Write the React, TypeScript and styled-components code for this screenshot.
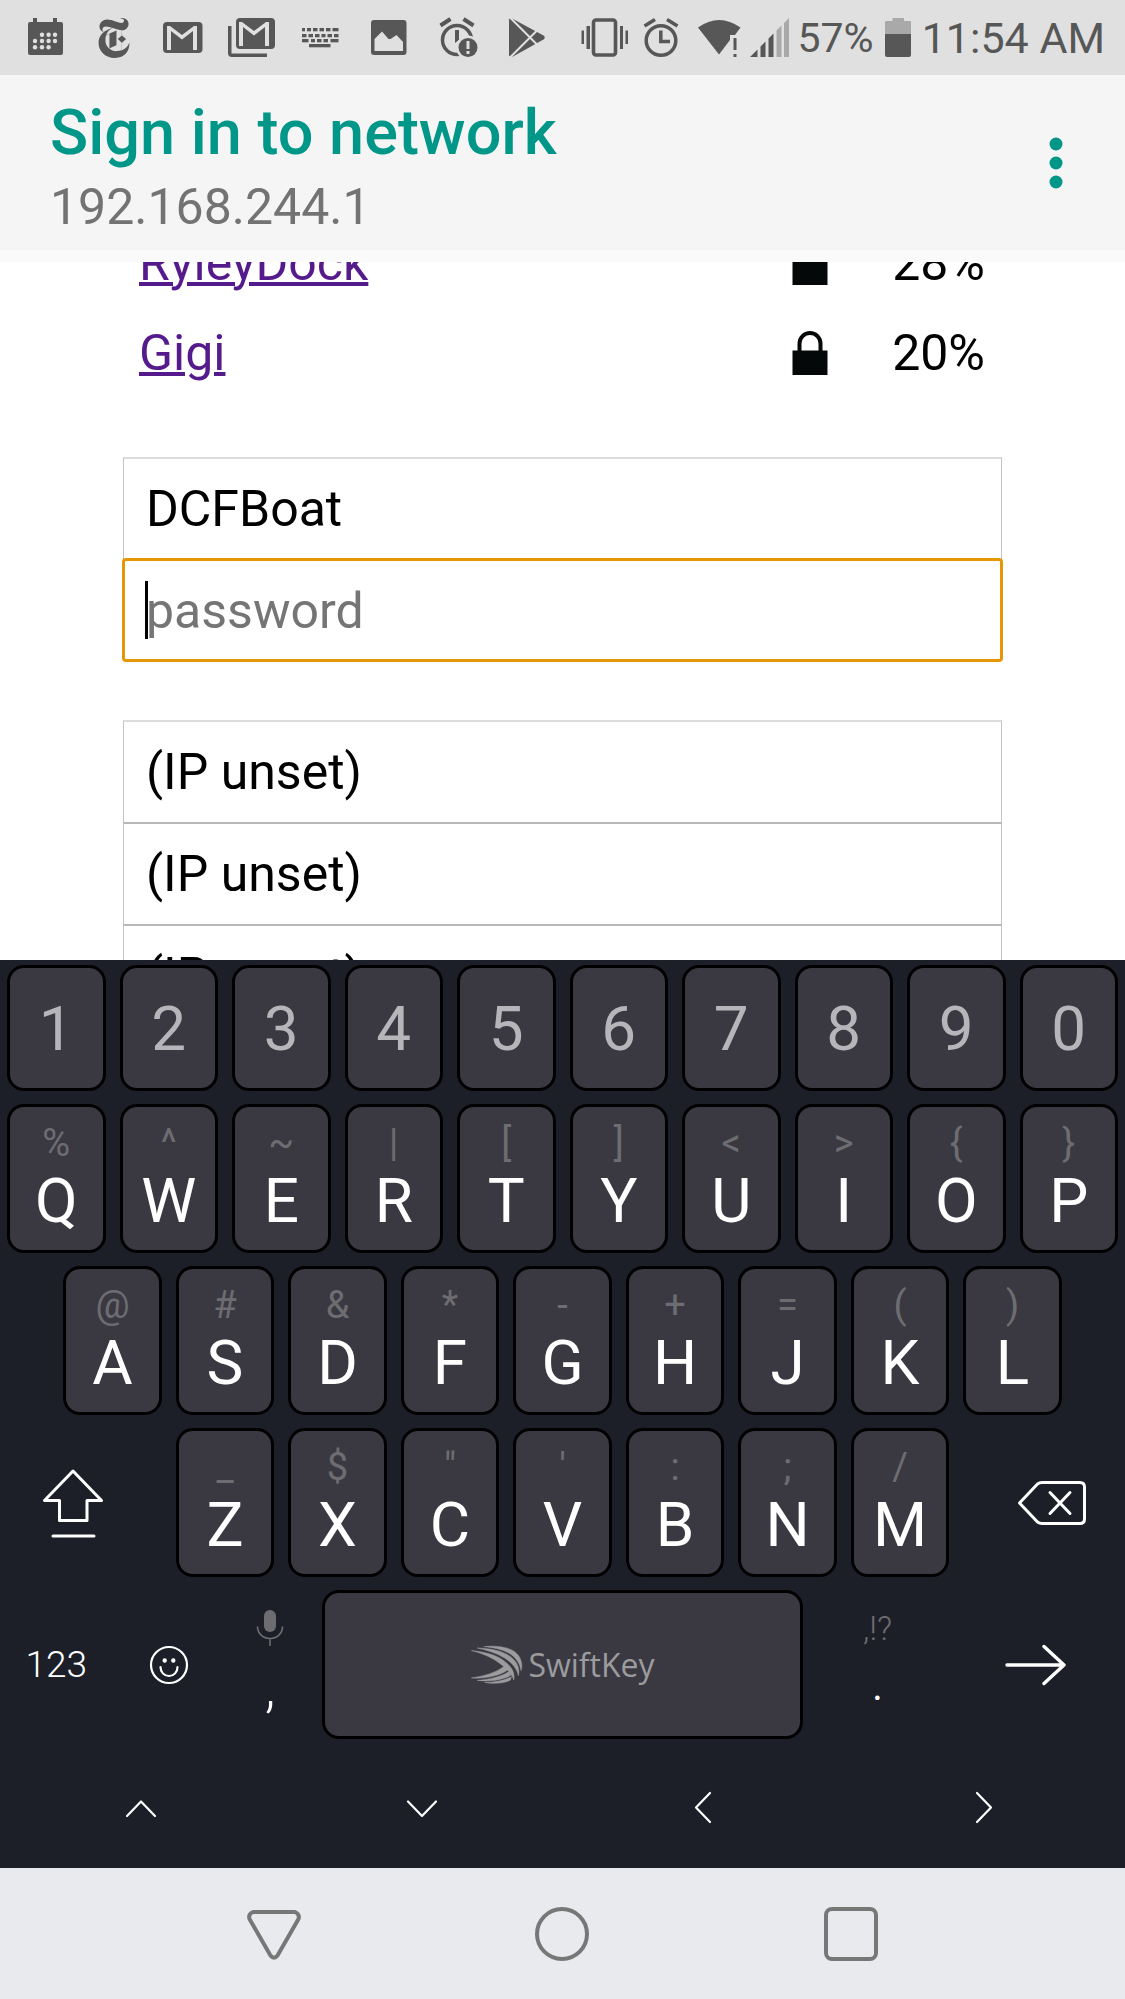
import React from 'react';
import styled, { createGlobalStyle } from 'styled-components';
import { SiNewyorktimes } from 'react-icons/si';

const INK = '#575757';
const FADED = '#a9a9a9';
const STATUS_BG = '#e0e0e0';
const TEAL = '#009688';

const GlobalStyle = createGlobalStyle`
  *, *::before, *::after { box-sizing: border-box; }
  body { margin: 0; background: #fff; font-family: Roboto, sans-serif; }
  button { border: 0; padding: 0; background: none; color: inherit; font: inherit; cursor: pointer; }
  svg { display: block; flex: none; }
`;

const Screen = styled.div`
  display: flex;
  flex-direction: column;
  height: 100vh;
  overflow: hidden;
`;

/* ---------- status bar ---------- */

const StatusBar = styled.div`
  display: flex;
  flex: none;
  align-items: center;
  justify-content: space-between;
  height: 75px;
  padding: 0 20px 0 21px;
  background: ${STATUS_BG};
  color: ${INK};
`;

const StatusGroup = styled.div<{ $gap: number }>`
  display: flex;
  align-items: center;
  gap: ${p => p.$gap}px;
`;

const LogoSlot = styled.span`
  display: flex;
  justify-content: center;
  width: 48px;
`;

const StatusText = styled.span<{ $size: number }>`
  font-size: ${p => p.$size}px;
  line-height: 52px;
  white-space: nowrap;
`;

const StatusIcon = ({ width = 48, children }: { width?: number; children: React.ReactNode }) => (
  <svg width={width} height={47} viewBox={`0 0 ${width} 47`} fill={INK} aria-hidden="true">
    {children}
  </svg>
);

const CalendarIcon = () => (
  <StatusIcon>
    <path d="M12 4h4v4h16V4h4v4h4a2 2 0 0 1 2 2v29a2 2 0 0 1-2 2H9a2 2 0 0 1-2-2V10a2 2 0 0 1 2-2h3z" />
    <g fill={STATUS_BG}>
      {[[21, 20.7], [27.6, 20.7], [34, 20.7], [14, 27], [21, 27], [27.6, 27], [34, 27], [14, 33.3], [21, 33.3], [27.6, 33.3]].map(
        ([x, y]) => <circle key={`${x}-${y}`} cx={x} cy={y} r="2.2" />,
      )}
    </g>
  </StatusIcon>
);

const envelope = 'M8 36V12h3l12 9 12-9h3v24h-4V17l-11 8.500-11-8.500v19z';

const MailIcon = () => (
  <StatusIcon>
    <rect x="4" y="8" width="39.500" height="31" rx="4" />
    <path d={envelope} fill={STATUS_BG} />
  </StatusIcon>
);

const MailStackIcon = () => (
  <StatusIcon>
    <rect x="8" y="4" width="39" height="31" rx="4" />
    <path d={envelope} fill={STATUS_BG} transform="translate(3 -4)" />
    <path d="M0 12h3.500v27.500H39V43H4a4 4 0 0 1-4-4z" />
  </StatusIcon>
);

const keyboardRows: [number, [number, number][]][] = [
  [14, [[5, 3], [10, 4], [16, 4.5], [22.500, 4.5], [29, 4.5], [35.500, 6]]],
  [20, [[5, 4.5], [11.500, 4.5], [18, 4.5], [24.500, 4], [30.500, 4.5], [37, 4.5]]],
  [25, [[5, 6.5], [14, 4], [20, 4.5], [26.500, 4.5], [33.500, 8]]],
  [30, [[12, 21.500]]],
];

const KeyboardIcon = () => (
  <StatusIcon>
    {keyboardRows.map(([y, keys]) =>
      keys.map(([x, w]) => <rect key={`${x}-${y}`} x={x} y={y} width={w} height="3.300" />),
    )}
  </StatusIcon>
);

const PictureIcon = () => (
  <StatusIcon>
    <rect x="5" y="6" width="35.500" height="35" rx="3" />
    <path d="M8.500 25l7.500-7.500 6.500 7.500h2l6-4 6.500 7v9H8.500z" fill={STATUS_BG} />
  </StatusIcon>
);

const AlarmAlertIcon = () => (
  <StatusIcon>
    <circle cx="22" cy="26" r="14.500" fill="none" stroke={INK} strokeWidth="3.500" />
    <path d="M5.500 11.500l10-6.500M28.500 5l10 6.500" stroke={INK} strokeWidth="4" />
    <path d="M20 16h4v10l-4 3z" />
    <circle cx="33" cy="33.500" r="12" fill={STATUS_BG} />
    <circle cx="33" cy="33.500" r="9.500" />
    <path d="M31.500 27h3v8h-3zM31.500 37h3v3h-3z" fill={STATUS_BG} />
  </StatusIcon>
);

const PlayStoreIcon = () => (
  <StatusIcon>
    <path d="M5 5.500Q6 3.500 9 5L39.500 21.500Q42 23.500 39.500 25.500L9 42.500Q6 43.500 5 41.500z" />
    <path d="M5.500 3L34 31.500M5.500 44L34 15.500" stroke={STATUS_BG} strokeWidth="2" />
  </StatusIcon>
);

const VibrateIcon = () => (
  <StatusIcon width={50}>
    <rect x="13.500" y="6" width="22" height="35" rx="2.500" fill="none" stroke={INK} strokeWidth="3.600" />
    <path d="M6.500 12H10v23H6.500zM1.500 16.500H4v13.500H1.500zM40 12h3v23h-3zM45.500 16.500H48v13.500h-2.500z" />
  </StatusIcon>
);

const AlarmIcon = () => (
  <StatusIcon>
    <circle cx="23" cy="26.500" r="14.800" fill="none" stroke={INK} strokeWidth="3.500" />
    <path d="M6.500 12L17 5.500M29 5.500L39.500 12M22.800 16.500V27.500H32" fill="none" stroke={INK} strokeWidth="3.500" />
  </StatusIcon>
);

const WifiIcon = () => (
  <StatusIcon>
    <path d="M4 13.500Q25-1.500 46.500 13.500L41 21H36v5L25 40.500z" />
    <path d="M39.500 24h3v12h-3zM39.500 40h3v3h-3z" />
  </StatusIcon>
);

const SignalIcon = () => (
  <StatusIcon width={40}>
    <path d="M0 43L7.500 35.500V43zM10.500 32.500l5-5V43h-5zM18.500 24.500l5-5V43h-5z" />
    <path d="M26.500 16.500l5-5V43h-5zM34 9l5-5v39h-5z" fill={FADED} />
  </StatusIcon>
);

const BatteryIcon = () => (
  <StatusIcon width={26}>
    <path d="M7.500 4h11.500v3H25a1 1 0 0 1 1 1v12H0V8a1 1 0 0 1 1-1h6.500z" fill={FADED} />
    <path d="M0 20h26v21a2 2 0 0 1-2 2H2a2 2 0 0 1-2-2z" />
  </StatusIcon>
);

/* ---------- app header ---------- */

const Header = styled.header`
  display: flex;
  flex: none;
  align-items: center;
  justify-content: space-between;
  height: 187px;
  padding: 0 36px 0 50px;
  border-bottom: 12px solid #fafafa;
  background: #f5f5f5;
`;

const Heading = styled.div`
  padding-top: 8px;
`;

const Title = styled.h1`
  margin: 0;
  color: ${TEAL};
  font-size: 63px;
  font-weight: 500;
  line-height: 80px;
`;

const Address = styled.p`
  margin: 0;
  color: #737373;
  font-size: 50px;
  line-height: 68px;
`;

const MenuButton = styled.button`
  display: flex;
  justify-content: center;
  width: 66px;
`;

/* ---------- web page ---------- */

const Page = styled.main`
  flex: 1 1 0;
  min-height: 0;
  overflow: hidden;
  padding: 0 123px;
  background: #fff;
  color: #000;
  font-size: 50px;
`;

/* The page is scrolled, so the first row is partly under the header. */
const Networks = styled.table`
  width: 100%;
  margin-top: -44px;
  border-spacing: 0;
  table-layout: fixed;
`;

const NameCell = styled.td`
  height: 90px;
  padding: 0 0 0 16px;
`;

const LockCell = styled.td`
  width: 100px;
  padding: 0;
`;

const StrengthCell = styled.td`
  width: 110px;
  padding: 0 17px 0 0;
  text-align: right;
`;

const NetworkLink = styled.a`
  color: #551a8b;
  text-decoration: underline;
  text-decoration-thickness: 4px;
`;

const FieldGroup = styled.div`
  display: flex;
  flex-direction: column;
  margin-top: 59px;
`;

const FieldWrap = styled.div`
  position: relative;
  display: flex;
`;

const Field = styled.input<{ $focused?: boolean; $first?: boolean }>`
  width: 100%;
  height: 102px;
  padding: 0 22px;
  border: solid #c4c4c4;
  border-width: 2px 1px 0;
  border-top-color: ${p => (p.$first ? '#dcdcdc' : '#b8b8b8')};
  border-radius: 0;
  outline: ${p => (p.$focused ? '3px solid #e69706' : 'none')};
  outline-offset: -2px;
  ${p => p.$focused && 'border-color: transparent; border-radius: 3px;'}
  background: transparent;
  color: #000;
  font: inherit;
  &::placeholder { color: #757575; opacity: 1; }
`;

const Caret = styled.span`
  position: absolute;
  top: 22px;
  left: 22px;
  width: 3px;
  height: 58px;
  background: #000;
`;

const LockIcon = () => (
  <svg width="36" height="46" viewBox="0 0 36 46" aria-label="Secured">
    <path d="M7.500 22V13.500a10.500 10.500 0 0 1 21 0V22" fill="none" stroke="#050808" strokeWidth="4" />
    <rect x="0.500" y="20.500" width="35" height="24.500" fill="#050808" />
  </svg>
);

/* ---------- on-screen keyboard ---------- */

const Keyboard = styled.section`
  display: flex;
  flex: none;
  flex-direction: column;
  gap: 13px;
  padding: 5px 0 4px;
  background: #1d1f28;
  color: #fff;
`;

const KeyRow = styled.div<{ $columns: string; $height?: number; $inset?: string }>`
  display: grid;
  grid-template-columns: ${p => p.$columns};
  height: ${p => p.$height ?? 149}px;
  padding: 0 ${p => p.$inset ?? '0'};
`;

const Key = styled.button<{ $bare?: boolean; $stacked?: boolean }>`
  && {
    display: flex;
    flex-direction: ${p => (p.$stacked ? 'column' : 'row')};
    align-items: center;
    justify-content: ${p => (p.$stacked ? 'flex-start' : 'center')};
    min-width: 0;
    margin: 0 ${p => (p.$bare ? 0 : 7)}px;
    padding-top: ${p => (p.$stacked ? 14 : 0)}px;
    border: 3px solid ${p => (p.$bare ? 'transparent' : '#000')};
    border-radius: 17px;
    background: ${p => (p.$bare ? 'transparent' : '#3a3942')};
  }
`;

const Digit = styled.span`
  padding-top: 2px;
  color: #b6b5ba;
  font-size: 62px;
  line-height: 72px;
`;

const Hint = styled.span<{ $light?: boolean }>`
  color: #6d6d71;
  font-size: ${p => (p.$light ? 33 : 38)}px;
  font-weight: ${p => (p.$light ? 300 : 400)};
  line-height: 44px;
`;

const Letter = styled.span<{ $size?: number; $light?: boolean }>`
  font-size: ${p => p.$size ?? 62}px;
  font-weight: ${p => (p.$light ? 300 : 400)};
  line-height: 72px;
`;

const ModeLabel = styled.span`
  font-size: 37px;
  font-weight: 300;
`;

const Brand = styled.span`
  display: flex;
  align-items: center;
  gap: 5px;
  color: #9c9b9e;
  font-family: 'Open Sans', sans-serif;
  font-size: 32px;
  line-height: 40px;
`;

const LineIcon = styled.svg`
  fill: none;
  stroke: #fff;
  stroke-linecap: round;
  stroke-linejoin: round;
`;

const BrandMark = () => (
  <svg width="53" height="41" viewBox="88 72 160 122" fill="currentColor" stroke="currentColor" strokeWidth="1.500" aria-hidden="true">
    <path d="M130 79C175 74 215 82 232 103C243 116 248 135 242 152C240 132 228 112 205 98C185 87 160 82 130 79Z" />
    <path d="M110 83C150 84 185 92 207 107C228 121 240 142 234 167C230 146 215 127 192 113C168 98 140 90 110 83Z" />
    <path d="M92 91C130 95 165 103 188 120C210 136 226 156 220 180C214 160 198 144 178 130C155 112 125 99 92 91Z" />
    <path d="M92 174C130 168 165 158 192 138L203 149C180 166 140 176 92 174Z" />
    <path d="M110 181C145 178 180 171 206 154L212 165C190 179 150 186 110 181Z" />
    <path d="M132 187C160 187 190 182 213 170L210 180C195 190 160 192 132 187Z" />
  </svg>
);

const MicIcon = () => (
  <svg width="28" height="44" viewBox="0 0 28 44" fill="#6d6d71" aria-hidden="true">
    <rect x="8" y="3" width="12" height="22" rx="6" />
    <path d="M1.500 19.500c0 7 5.500 12 12.500 12s12.500-5 12.500-12M14 31.500V39" fill="none" stroke="#6d6d71" strokeWidth="1.600" />
  </svg>
);

const chevrons: { label: string; path: string }[] = [
  { label: 'Move up', path: 'M6 28L20 13.500L34 28' },
  { label: 'Move down', path: 'M6 13.500L20 28L34 13.500' },
  { label: 'Move left', path: 'M27 5L13 19.500L27 34' },
  { label: 'Move right', path: 'M13 5L27 19.500L13 34' },
];

const topRow = ['Q%', 'W^', 'E~', 'R|', 'T[', 'Y]', 'U<', 'I>', 'O{', 'P}'];
const homeRow = ['A@', 'S#', 'D&', 'F*', 'G-', 'H+', 'J=', 'K(', 'L)'];
const lowerRow = ['Z_', 'X$', 'C"', "V'", 'B:', 'N;', 'M/'];

const LetterKeys = ({ keys }: { keys: string[] }) => (
  <>
    {keys.map(([letter, hint]: any) => (
      <Key key={letter} type="button" $stacked>
        <Hint>{hint}</Hint>
        <Letter>{letter}</Letter>
      </Key>
    ))}
  </>
);

/* ---------- navigation bar ---------- */

const NavBar = styled.nav`
  display: grid;
  flex: none;
  grid-template-columns: repeat(3, 1fr);
  height: 131px;
  padding: 0 130px;
  background: #e9eaed;
`;

const NavButton = styled.button`
  display: flex;
  align-items: center;
  justify-content: center;
`;

const NavIcon = ({ children }: { children: React.ReactNode }) => (
  <svg width="56" height="56" viewBox="0 0 56 56" fill="none" stroke="#767877" strokeWidth="4" strokeLinejoin="round">
    {children}
  </svg>
);

export default function App() {
  return (
    <Screen>
      <GlobalStyle />
      <StatusBar>
        <StatusGroup $gap={21}>
          <CalendarIcon />
          <LogoSlot><SiNewyorktimes size={40} /></LogoSlot>
          <MailIcon />
          <MailStackIcon />
          <KeyboardIcon />
          <PictureIcon />
          <AlarmAlertIcon />
          <PlayStoreIcon />
        </StatusGroup>
        <StatusGroup $gap={8}>
          <VibrateIcon />
          <AlarmIcon />
          <WifiIcon />
          <SignalIcon />
          <StatusGroup $gap={11}>
            <StatusText $size={41}>57%</StatusText>
            <BatteryIcon />
            <StatusText $size={43}>11:54 AM</StatusText>
          </StatusGroup>
        </StatusGroup>
      </StatusBar>

      <Header>
        <Heading>
          <Title>Sign in to network</Title>
          <Address>192.168.244.1</Address>
        </Heading>
        <MenuButton type="button" aria-label="More options">
          <svg width="16" height="56" viewBox="0 0 16 56" fill={TEAL}>
            <circle cx="8" cy="9" r="6.500" />
            <circle cx="8" cy="28" r="6.500" />
            <circle cx="8" cy="47" r="6.500" />
          </svg>
        </MenuButton>
      </Header>

      <Page>
        <Networks>
          <tbody>
            {[['RyleyDock', '28%'], ['Gigi', '20%']].map(([name, strength]) => (
              <tr key={name}>
                <NameCell><NetworkLink href="#">{name}</NetworkLink></NameCell>
                <LockCell><LockIcon /></LockCell>
                <StrengthCell>{strength}</StrengthCell>
              </tr>
            ))}
          </tbody>
        </Networks>
        <FieldGroup>
          <Field aria-label="Network name" defaultValue="DCFBoat" $first />
          <FieldWrap>
            <Field type="password" aria-label="Password" placeholder="password" $focused />
            <Caret />
          </FieldWrap>
        </FieldGroup>
        <FieldGroup>
          <Field aria-label="Static IP" defaultValue="(IP unset)" $first />
          <Field aria-label="Gateway IP" defaultValue="(IP unset)" />
          <Field aria-label="Subnet" defaultValue="(IP unset)" />
        </FieldGroup>
      </Page>

      <Keyboard aria-label="Keyboard">
        <KeyRow $columns="repeat(10, 1fr)" $height={126}>
          {[...'1234567890'].map(d => (
            <Key key={d} type="button"><Digit>{d}</Digit></Key>
          ))}
        </KeyRow>
        <KeyRow $columns="repeat(10, 1fr)"><LetterKeys keys={topRow} /></KeyRow>
        <KeyRow $columns="repeat(9, 1fr)" $inset="5%"><LetterKeys keys={homeRow} /></KeyRow>
        <KeyRow $columns="13fr 2fr repeat(7, 10fr) 2fr 13fr">
          <Key type="button" $bare aria-label="Shift">
            <LineIcon width="64" height="72" viewBox="0 0 64 72" strokeWidth="3">
              <path d="M32 4L3.500 33.500H18.500V53.500H46V33.500H60.500ZM12 69H53" />
            </LineIcon>
          </Key>
          <span />
          <LetterKeys keys={lowerRow} />
          <span />
          <Key type="button" $bare aria-label="Backspace">
            <LineIcon width="72" height="48" viewBox="0 0 72 48" strokeWidth="3">
              <path d="M3.500 24L21.500 5Q23.500 3.500 26 3.500H64Q68.500 3.500 68.500 8V40Q68.500 44.500 64 44.500H26Q23.500 44.500 21.500 43ZM34 13.500L54 34.500M54 13.500L34 34.500" />
            </LineIcon>
          </Key>
        </KeyRow>
        <KeyRow $columns="10fr 10fr 8fr 44fr 12fr 16fr">
          <Key type="button" $bare><ModeLabel>123</ModeLabel></Key>
          <Key type="button" $bare aria-label="Emoji">
            <LineIcon width="40" height="40" viewBox="0 0 40 40" strokeWidth="2.200">
              <circle cx="20" cy="20" r="18" />
              <path d="M11.500 22c0 5 3.500 9 8.500 9s8.500-4 8.500-9" />
              <path d="M15.700 15.500v.1M24.300 15.500v.1" strokeWidth="4.400" />
            </LineIcon>
          </Key>
          <Key type="button" $bare $stacked>
            <MicIcon />
            <Letter $size={56} $light>,</Letter>
          </Key>
          <Key type="button">
            <Brand><BrandMark />SwiftKey</Brand>
          </Key>
          <Key type="button" $bare $stacked>
            <Hint $light>,!?</Hint>
            <Letter $size={40}>.</Letter>
          </Key>
          <Key type="button" $bare aria-label="Enter">
            <LineIcon width="64" height="44" viewBox="0 0 64 44" strokeWidth="3.400">
              <path d="M4 22H61M41 3.500L61 22L41 40.500" />
            </LineIcon>
          </Key>
        </KeyRow>
        <KeyRow $columns="repeat(4, 1fr)" $height={112}>
          {chevrons.map(({ label, path }) => (
            <Key key={label} type="button" $bare aria-label={label}>
              <LineIcon width="40" height="40" viewBox="0 0 40 40" strokeWidth="2.200"><path d={path} /></LineIcon>
            </Key>
          ))}
        </KeyRow>
      </Keyboard>

      <NavBar>
        <NavButton type="button" aria-label="Back">
          <NavIcon><path d="M7 6H49Q54 8 52.500 13L31.500 49.500Q28 54 24.500 49.500L3.500 13Q2 8 7 6Z" /></NavIcon>
        </NavButton>
        <NavButton type="button" aria-label="Home">
          <NavIcon><circle cx="28" cy="28" r="25" /></NavIcon>
        </NavButton>
        <NavButton type="button" aria-label="Recent apps">
          <NavIcon><rect x="3" y="3" width="50" height="50" rx="6" /></NavIcon>
        </NavButton>
      </NavBar>
    </Screen>
  );
}
